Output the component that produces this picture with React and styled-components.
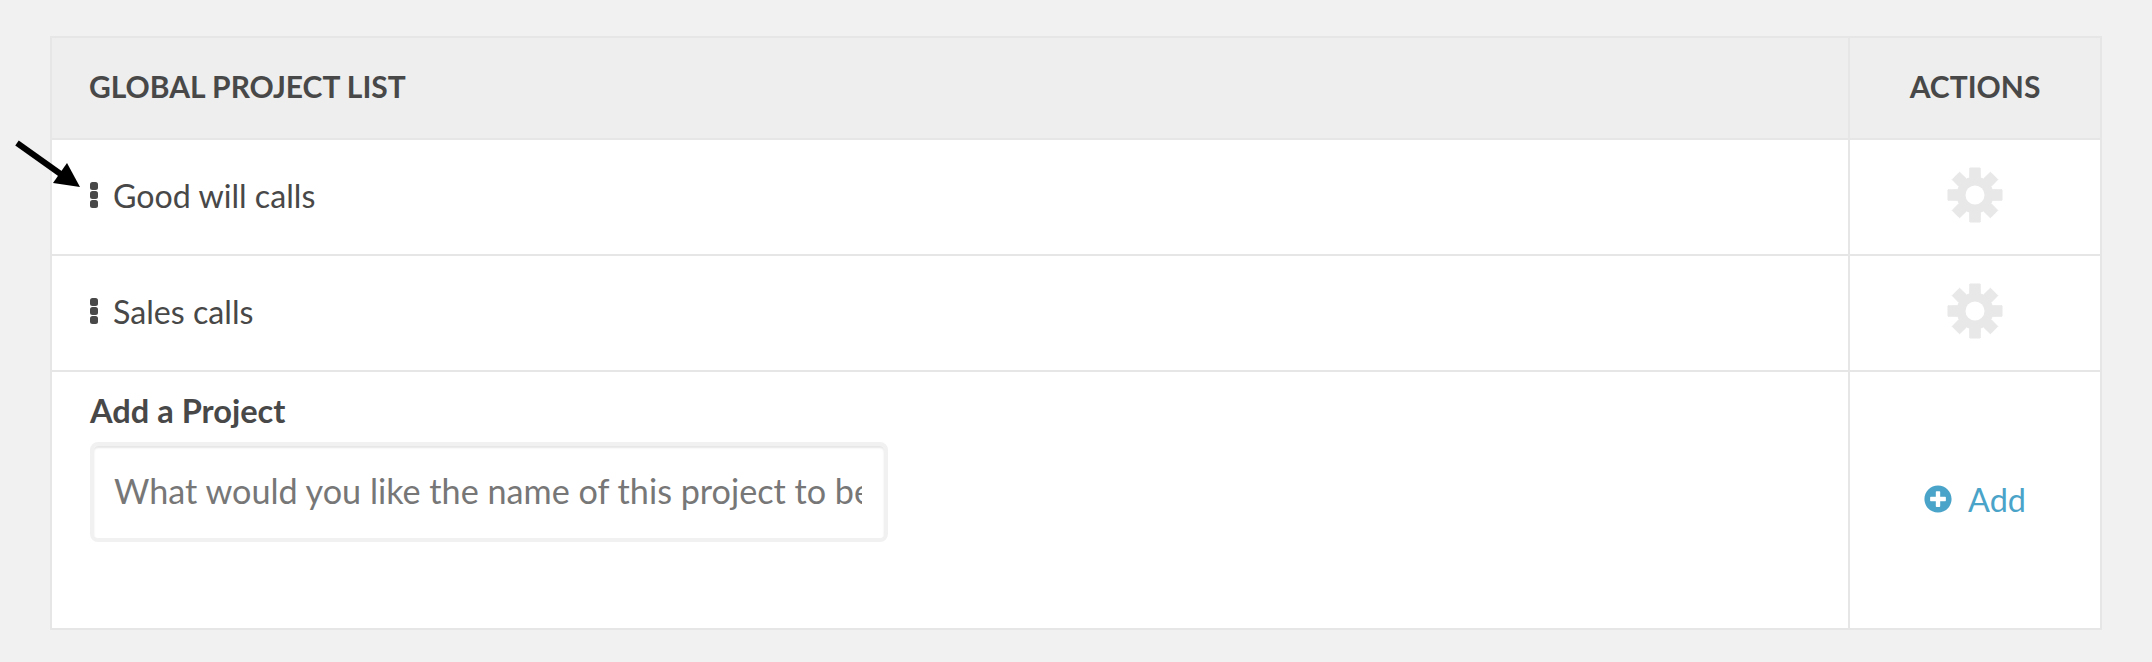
import React from 'react'
import styled, { createGlobalStyle } from 'styled-components';
import { FaPlusCircle } from 'react-icons/fa';

const GlobalStyle = createGlobalStyle`
  html, body {
    margin: 0;
    padding: 0;
    background: #f1f1f1;
  }
  body {
    font-family: Lato, "Open Sans", sans-serif;
    color: #484848;
  }
`;

const Page = styled.div`
  position: relative;
  box-sizing: border-box;
  width: 2152px;
  height: 662px;
  padding: 36px 50px 0;
`;

const Table = styled.div`
  box-sizing: border-box;
  width: 2052px;
  border: 2px solid #e6e6e6;
  background: #fff;
  display: grid;
  grid-template-columns: 1796px 1fr;
`;

const HeadCell = styled.div`
  box-sizing: border-box;
  height: 102px;
  display: flex;
  align-items: center;
  justify-content: ${(props) => (props.center ? 'center' : 'flex-start')};
  padding: 0 0 4px ${(props) => (props.center ? '0' : '37px')};
  background: #eeeeee;
  border-bottom: 2px solid #e6e6e6;
  border-left: ${(props) => (props.center ? '2px solid #e6e6e6' : 'none')};
  font-size: 30px;
  font-weight: 700;
  text-transform: uppercase;
`;

const NameCell = styled.div`
  box-sizing: border-box;
  height: 116px;
  display: flex;
  align-items: center;
  padding-left: 38px;
  padding-bottom: 4px;
  border-bottom: 2px solid #e6e6e6;
  font-size: 32.2px;
`;

const ActionCell = styled.div`
  box-sizing: border-box;
  height: ${(props) => props.h || '116px'};
  display: flex;
  align-items: center;
  justify-content: center;
  padding-bottom: ${(props) => (props.last ? '0' : '4px')};
  border-left: 2px solid #e6e6e6;
  border-bottom: ${(props) => (props.last ? 'none' : '2px solid #e6e6e6')};
`;

const Grip = styled.span`
  display: flex;
  flex-direction: column;
  gap: 1px;
  margin-right: 15px;

  i {
    display: block;
    width: 8px;
    height: 8px;
    border-radius: 2.5px;
    background: #484848;
  }
`;

const AddCell = styled.div`
  box-sizing: border-box;
  height: 256px;
  padding: 21px 0 0 38px;
`;

const AddLabel = styled.label`
  display: block;
  font-size: 32.6px;
  line-height: 36px;
  font-weight: 700;
  margin-bottom: 13px;
`;

const NameInput = styled.input`
  box-sizing: border-box;
  display: block;
  width: 798px;
  height: 100px;
  padding: 0 22px 4px 20px;
  border: 4px solid #f1f1f1;
  border-radius: 8px;
  box-shadow: inset 0 2px 2px rgba(0, 0, 0, 0.1);
  background: #fff;
  outline: none;
  font-family: inherit;
  font-size: 34.2px;
  color: #484848;

  &::placeholder {
    color: #777;
    opacity: 1;
  }
`;

const AddLink = styled.a`
  display: flex;
  align-items: center;
  gap: 16px;
  color: #4aa3c8;
  font-size: 32.4px;
  padding-bottom: 2px;
  cursor: pointer;

  svg {
    width: 28px;
    height: 28px;
  }
`;

const Arrow = styled.svg`
  position: absolute;
  left: 14px;
  top: 138px;
  width: 70px;
  height: 52px;
`;

// 8 tooth gear, same shape as the settings icon in the action column
const gearPath = () => {
  const cx = 28;
  const cy = 28;
  const pts = [];
  for (let i = 0; i < 8; i++) {
    const a = (i * Math.PI) / 4 - Math.PI / 2;
    const pt = (r, d) => {
      const ang = a + d;
      return `${(cx + r * Math.cos(ang)).toFixed(2)} ${(cy + r * Math.sin(ang)).toFixed(2)}`;
    };
    pts.push(pt(18, -0.3), pt(27.5, -0.19), pt(27.5, 0.19), pt(18, 0.3));
  }
  return `M${pts.join('L')}Z`;
};

const GearIcon = () => (
  <svg width="56" height="56" viewBox="0 0 56 56" aria-hidden="true">
    <path d={gearPath()} fill="#e8e8e8" strokeLinejoin="round" stroke="#e8e8e8" strokeWidth="1" />
    <circle cx="28" cy="28" r="9.5" fill="#fff" />
  </svg>
);

const projects = ['Good will calls', 'Sales calls'];

const App = () => (
  <Page>
    <GlobalStyle />
    <Table>
      <HeadCell>Global Project List</HeadCell>
      <HeadCell center>Actions</HeadCell>
      {projects.map((name) => (
        <React.Fragment key={name}>
          <NameCell>
            <Grip><i /><i /><i /></Grip>
            {name}
          </NameCell>
          <ActionCell><GearIcon /></ActionCell>
        </React.Fragment>
      ))}
      <AddCell>
        <AddLabel>Add a Project</AddLabel>
        <NameInput placeholder="What would you like the name of this project to be?" />
      </AddCell>
      <ActionCell h="256px" last>
        <AddLink><FaPlusCircle />Add</AddLink>
      </ActionCell>
    </Table>
    <Arrow viewBox="0 0 70 52">
      <line x1="3" y1="5" x2="48" y2="37" stroke="#000" strokeWidth="6" />
      <polygon points="66,49 53,25 39,45" fill="#000" />
    </Arrow>
  </Page>
);

export default App
